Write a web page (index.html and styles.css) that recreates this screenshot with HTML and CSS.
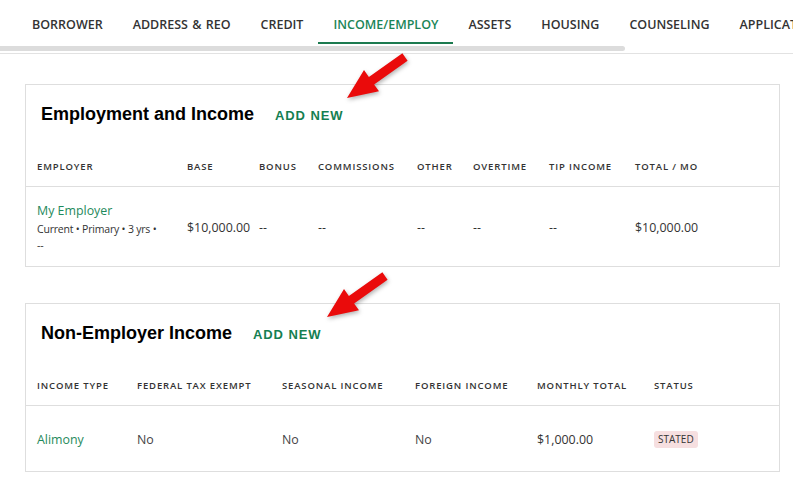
FILE: index.html
```html
<!DOCTYPE html>
<html lang="en">

<head>
    <meta charset="UTF-8">
    <meta name="viewport" content="width=device-width, initial-scale=1.0">
    <title>Income / Employment</title>
    <link rel="stylesheet" href="styles.css">
</head>

<body>
    <div class="tabs-wrap">
        <nav class="tabs">
            <a class="tab">BORROWER</a>
            <a class="tab">ADDRESS &amp; REO</a>
            <a class="tab">CREDIT</a>
            <a class="tab active">INCOME/EMPLOY</a>
            <a class="tab">ASSETS</a>
            <a class="tab">HOUSING</a>
            <a class="tab">COUNSELING</a>
            <a class="tab">APPLICATION</a>
        </nav>
        <div class="scrollbar"></div>
    </div>

    <main class="content">
        <section class="card">
            <div class="card-title">
                <h2>Employment and Income</h2>
                <a class="add-new">ADD NEW</a>
            </div>
            <div class="grid emp-grid head">
                <div>EMPLOYER</div>
                <div>BASE</div>
                <div>BONUS</div>
                <div>COMMISSIONS</div>
                <div>OTHER</div>
                <div>OVERTIME</div>
                <div>TIP INCOME</div>
                <div>TOTAL / MO</div>
            </div>
            <div class="grid emp-grid row emp-row">
                <div class="employer">
                    <a class="link">My Employer</a>
                    <div class="meta">Current • Primary • 3 yrs • --</div>
                </div>
                <div>$10,000.00</div>
                <div>--</div>
                <div>--</div>
                <div>--</div>
                <div>--</div>
                <div>--</div>
                <div>$10,000.00</div>
            </div>
        </section>

        <section class="card">
            <div class="card-title">
                <h2>Non-Employer Income</h2>
                <a class="add-new">ADD NEW</a>
            </div>
            <div class="grid other-grid head">
                <div>INCOME TYPE</div>
                <div>FEDERAL TAX EXEMPT</div>
                <div>SEASONAL INCOME</div>
                <div>FOREIGN INCOME</div>
                <div>MONTHLY TOTAL</div>
                <div>STATUS</div>
            </div>
            <div class="grid other-grid row other-row">
                <div><a class="link">Alimony</a></div>
                <div class="muted">No</div>
                <div class="muted">No</div>
                <div class="muted">No</div>
                <div>$1,000.00</div>
                <div><span class="badge">STATED</span></div>
            </div>
        </section>
    </main>

    <!-- callout arrows drawn over the page -->
    <svg class="arrow arrow-one" width="75" height="56" viewBox="0 0 75 56">
        <polygon points="7,50 24,22 28.9,29 62.4,5.3 67.6,12.7 34.1,36.4 39,43.3" />
    </svg>
    <svg class="arrow arrow-two" width="75" height="56" viewBox="0 0 75 56">
        <polygon points="7,50 24,22 28.9,29 62.4,5.3 67.6,12.7 34.1,36.4 39,43.3" />
    </svg>
</body>

</html>
```

FILE: styles.css
```css
body {
    margin: 0;
    font-family: "Open Sans", "Noto Sans", sans-serif;
    color: #333;
    background: #fff;
    overflow: hidden;
}

.tabs-wrap {
    border-bottom: 1px solid #e2e2e2;
}

.tabs {
    display: flex;
    height: 44px;
    padding-left: 17px;
    white-space: nowrap;
    overflow: hidden;
}

.tab {
    padding: 14px 15px 0;
    height: 28px;
    font-size: 12.5px;
    font-weight: 600;
    line-height: 21px;
    word-spacing: 1px;
    color: #333;
    border-bottom: 2px solid transparent;
}

.tab.active {
    color: #1b8557;
    border-bottom-color: #1b7a4f;
}

.scrollbar {
    width: 625px;
    height: 5px;
    margin: 2px 0 2px;
    background: #dcdcdc;
    border-radius: 0 3px 3px 0;
}

.content {
    padding: 30px 13px 20px 25px;
}

.card {
    border: 1px solid #dedede;
    margin-bottom: 36px;
}

.card-title {
    display: flex;
    align-items: baseline;
    padding: 17px 15px 0;
    height: 58px;
}

.card-title h2 {
    margin: 0;
    font-family: "Liberation Sans", Arial, sans-serif;
    font-size: 18px;
    font-weight: bold;
    line-height: 24px;
    color: #000;
}

.add-new {
    margin-left: 21px;
    font-family: "Liberation Sans", Arial, sans-serif;
    font-size: 13px;
    font-weight: bold;
    letter-spacing: 0.9px;
    color: #157f52;
}

.grid {
    display: grid;
    padding-left: 11px;
}

.emp-grid {
    grid-template-columns: 150px 72px 59px 99px 56px 76px 86px 1fr;
}

.other-grid {
    grid-template-columns: 100px 145px 133px 122px 117px 1fr;
}

.head {
    font-size: 9.5px;
    font-weight: 600;
    letter-spacing: 0.85px;
    line-height: 14px;
    padding-bottom: 12px;
    border-bottom: 1px solid #dedede;
    color: #333;
}

.row {
    align-items: center;
    font-size: 12.4px;
    line-height: 19px;
}

.emp-row {
    padding-top: 14px;
    padding-bottom: 13px;
}

.other-row {
    padding-top: 24px;
    padding-bottom: 22px;
}

.employer {
    padding-right: 10px;
}

.link {
    color: #1f8a5c;
}

.meta {
    max-width: 124px;
    font-size: 10.5px;
    letter-spacing: -0.2px;
    line-height: 16px;
    color: #333;
    margin-top: 1px;
}

.muted {
    color: #444;
}

.badge {
    display: inline-block;
    padding: 1px 4px;
    font-size: 10px;
    line-height: 15px;
    background: #f6dfe0;
    border-radius: 3px;
    color: #333;
    position: relative;
    top: -1px;
}

.arrow {
    position: absolute;
    fill: #ea0b0b;
    filter: drop-shadow(1px 2px 2px rgba(0, 0, 0, 0.3));
}

.arrow-one {
    left: 340px;
    top: 48px;
}

.arrow-two {
    left: 320px;
    top: 267px;
}
```
